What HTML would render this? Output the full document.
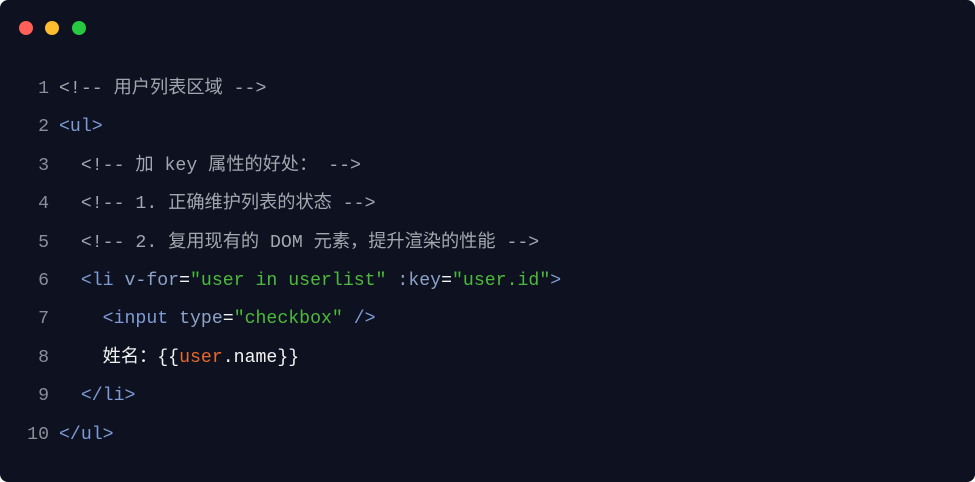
<!DOCTYPE html>
<html><head><meta charset="utf-8"><style>
html,body{margin:0;padding:0;background:#fff;}
.w{position:relative;width:975px;height:482px;background:#0d1120;border-radius:8px;overflow:hidden;}
.d{position:absolute;top:21px;width:14px;height:14px;border-radius:50%;}
.code{position:absolute;left:0;top:70px;font-family:"Liberation Mono","Noto Sans CJK SC",monospace;font-size:18.2px;}
.l{height:38.4px;line-height:38.4px;white-space:pre;color:#c9ccd3;}
.n{display:inline-block;width:49px;text-align:right;color:#8a8e98;padding-right:10px;}
.c{color:#a3a6ae}.t{color:#7e9bd4}.a{color:#8ea2c8}.s{color:#4cbb3c}.o{color:#e8692a}.wh{color:#f2f2f2}
</style></head><body><div class="w">
<div class="d" style="left:19px;background:#fe5f57"></div>
<div class="d" style="left:45px;background:#febc2e"></div>
<div class="d" style="left:72px;background:#28c840"></div>
<div class="code">
<div class="l"><span class="n">1</span><span class="c">&lt;!-- 用户列表区域 --&gt;</span></div>
<div class="l"><span class="n">2</span><span class="t">&lt;ul&gt;</span></div>
<div class="l"><span class="n">3</span><span class="c">  &lt;!-- 加 key 属性的好处： --&gt;</span></div>
<div class="l"><span class="n">4</span><span class="c">  &lt;!-- 1. 正确维护列表的状态 --&gt;</span></div>
<div class="l"><span class="n">5</span><span class="c">  &lt;!-- 2. 复用现有的 DOM 元素，提升渲染的性能 --&gt;</span></div>
<div class="l"><span class="n">6</span>  <span class="t">&lt;li</span> <span class="a">v-for</span><span class="wh">=</span><span class="s">"user in userlist"</span> <span class="a">:key</span><span class="wh">=</span><span class="s">"user.id"</span><span class="t">&gt;</span></div>
<div class="l"><span class="n">7</span>    <span class="t">&lt;input</span> <span class="a">type</span><span class="wh">=</span><span class="s">"checkbox"</span> <span class="t">/&gt;</span></div>
<div class="l"><span class="n">8</span>    <span class="wh">姓名：{{</span><span class="o">user</span><span class="wh">.name}}</span></div>
<div class="l"><span class="n">9</span>  <span class="t">&lt;/li&gt;</span></div>
<div class="l"><span class="n">10</span><span class="t">&lt;/ul&gt;</span></div>
</div>
</div></body></html>
